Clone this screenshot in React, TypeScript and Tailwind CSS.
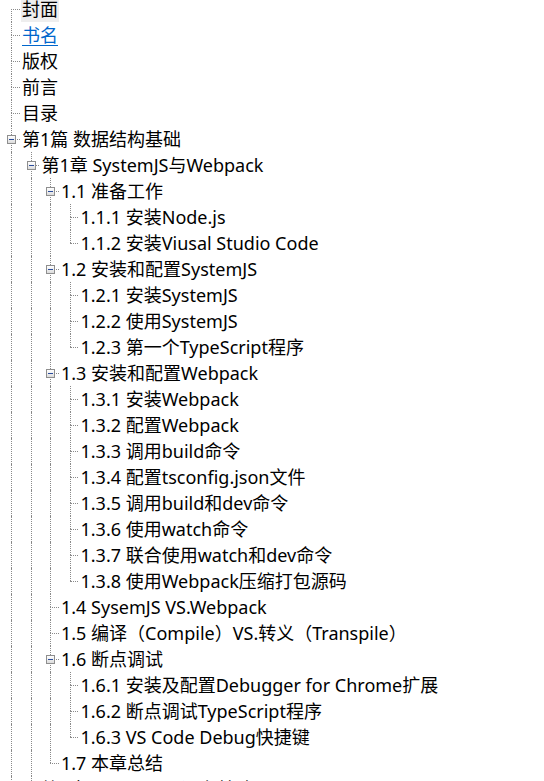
import React from "react";

interface Node {
  label: string;
  children?: Node[];
}

const TREE: Node[] = [
  { label: "封面" },
  { label: "书名" },
  { label: "版权" },
  { label: "前言" },
  { label: "目录" },
  {
    label: "第1篇 数据结构基础",
    children: [
      {
        label: "第1章 SystemJS与Webpack",
        children: [
          {
            label: "1.1 准备工作",
            children: [{ label: "1.1.1 安装Node.js" }, { label: "1.1.2 安装Viusal Studio Code" }]
          },
          {
            label: "1.2 安装和配置SystemJS",
            children: [
              { label: "1.2.1 安装SystemJS" },
              { label: "1.2.2 使用SystemJS" },
              { label: "1.2.3 第一个TypeScript程序" }
            ]
          },
          {
            label: "1.3 安装和配置Webpack",
            children: [
              { label: "1.3.1 安装Webpack" },
              { label: "1.3.2 配置Webpack" },
              { label: "1.3.3 调用build命令" },
              { label: "1.3.4 配置tsconfig.json文件" },
              { label: "1.3.5 调用build和dev命令" },
              { label: "1.3.6 使用watch命令" },
              { label: "1.3.7 联合使用watch和dev命令" },
              { label: "1.3.8 使用Webpack压缩打包源码" }
            ]
          },
          { label: "1.4 SysemJS VS.Webpack" },
          { label: "1.5 编译（Compile）VS.转义（Transpile）" },
          {
            label: "1.6 断点调试",
            children: [
              { label: "1.6.1 安装及配置Debugger for Chrome扩展" },
              { label: "1.6.2 断点调试TypeScript程序" },
              { label: "1.6.3 VS Code Debug快捷键" }
            ]
          },
          { label: "1.7 本章总结" }
        ]
      },
      { label: "第2章 TypeScript语言基础" }
    ]
  },
  { label: "第2篇 算法" }
];

interface Row {
  label: string;
  ancestors: boolean[]; // whether each ancestor column keeps its vertical line
  hasNext: boolean;
  hasChildren: boolean;
  first: boolean;
}

function flatten(nodes: Node[], ancestors: boolean[], out: Row[]) {
  nodes.forEach((n, i) => {
    const hasNext = i < nodes.length - 1;
    out.push({
      label: n.label,
      ancestors,
      hasNext,
      hasChildren: !!n.children,
      first: ancestors.length === 0 && i === 0
    });
    if (n.children) flatten(n.children, [...ancestors, hasNext], out);
  });
  return out;
}

const ROWS = flatten(TREE, [], []);

function TreeRow({ row, index }: { row: Row; index: number }) {
  const selected = index === 0;
  const hover = index === 1;
  return (
    <div className="flex h-[26px] shrink-0">
      {row.ancestors.map((cont, i) => (
        <div key={i} className="w-[19.5px] shrink-0 pl-[11px]">
          {cont && <div className="h-full border-l border-dotted border-[#8a8a8a]" />}
        </div>
      ))}
      <div className="relative w-[19.5px] shrink-0 pl-[11px] grid grid-rows-[13px_13px]">
        <div className={row.first ? "" : "border-l border-dotted border-[#8a8a8a]"} />
        <div
          className={`border-t border-dotted border-[#8a8a8a] ${
            row.hasNext ? "border-l" : ""
          }`}
        />
        {row.hasChildren && (
          <div className="absolute left-[7px] top-[9px] w-[9px] h-[9px] border border-[#8e8e8e] bg-gradient-to-b from-white to-[#dcdcdc] flex items-center justify-center">
            <div className="w-[5px] h-px bg-[#2a4c9c]" />
          </div>
        )}
      </div>
      <span
        className={`ml-[1.5px] px-[1px] whitespace-nowrap text-[18px] leading-[26px] ${
          selected
            ? "bg-[#eeeeee] text-black"
            : hover
            ? "text-[#0066cc] underline underline-offset-[3px]"
            : "text-black"
        }`}
      >
        {row.label}
      </span>
    </div>
  );
}

export default function App() {
  return (
    <div
      className="w-[544px] h-[781px] overflow-hidden bg-white"
      style={{ fontFamily: '"Noto Sans", "Noto Sans CJK SC", sans-serif' }}
    >
      <div className="flex flex-col -mt-[4px]">
        {ROWS.map((r, i) => (
          <TreeRow key={i} row={r} index={i} />
        ))}
      </div>
    </div>
  );
}
